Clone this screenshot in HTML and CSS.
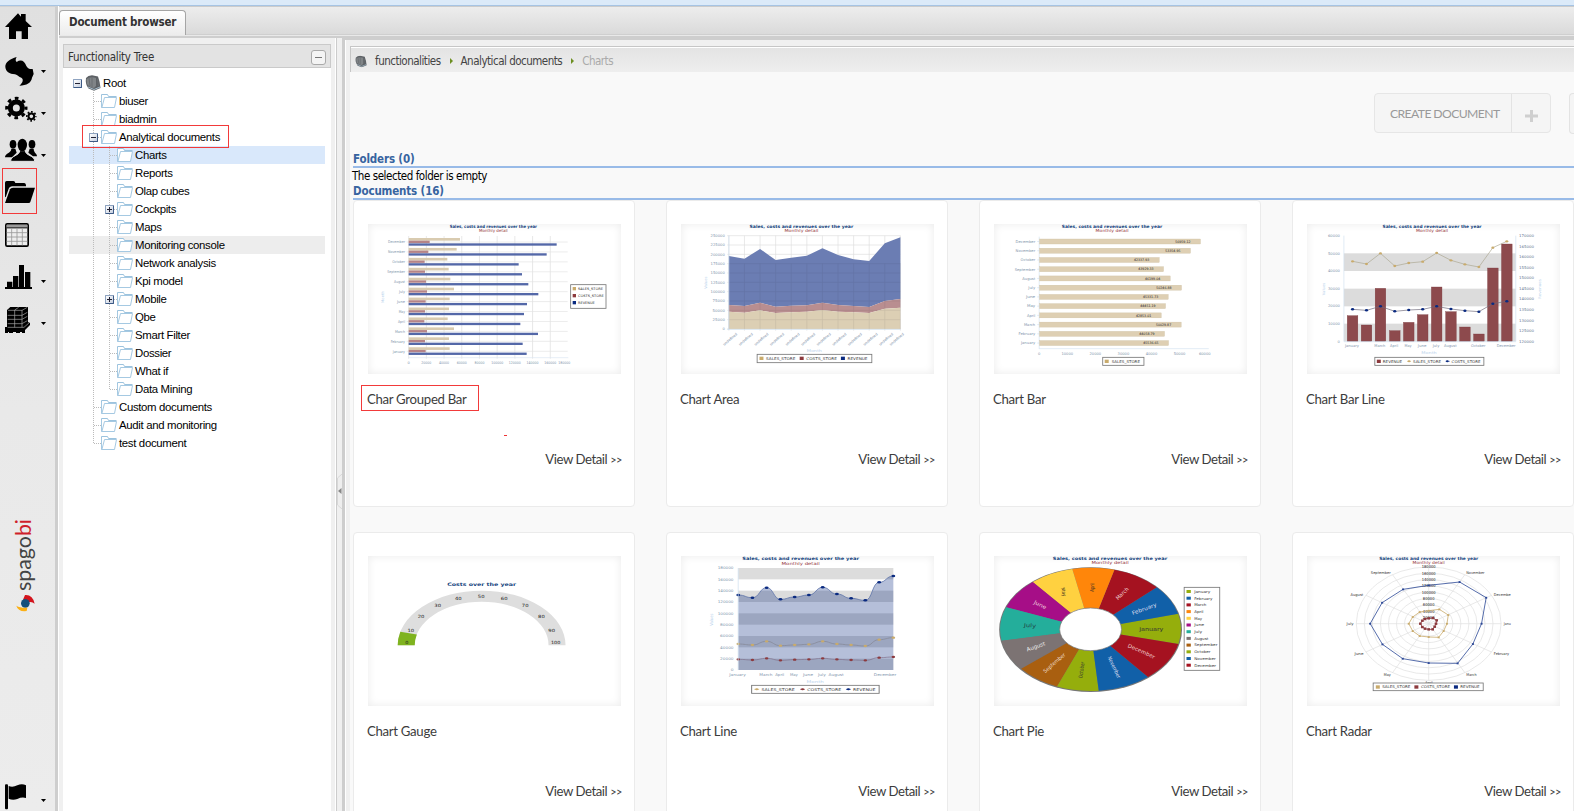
FILE: index.html
```html
<!DOCTYPE html>
<html lang="en">
<head>
<meta charset="utf-8">
<title>Document browser</title>
<link rel="stylesheet" href="styles.css">
</head>
<body>
<div class="topstrip"></div>
<div class="app">
  <nav class="sidebar">
    <svg class="item" viewBox="0 18 165 126"><path d="M15 81L54 40 63 50V42H77V63L96 81H84V117H65V94H48V117H27V81Z"/></svg>
    <svg class="item" viewBox="0 144 165 126"><path d="M50 171C30 176 15 188 16 201C17 214 28 222 45 223C54 225 56 231 64 233C72 238 68 249 58 257C80 256 94 248 96 233L101 222 98 207C90 208 84 206 79 198C74 182 62 177 50 186C46 183 46 177 50 171Z"/><path d="M123 210H138L130.500 219Z"/></svg>
    <svg class="item" viewBox="0 270 165 126"><g fill="none" stroke="#000"><circle cx="49" cy="324" r="18" stroke-width="15"/><circle cx="49" cy="324" r="29" stroke-width="9" stroke-dasharray="11 11.780" stroke-dashoffset="5.500"/><circle cx="94" cy="349" r="8.500" stroke-width="6"/><circle cx="94" cy="349" r="13.500" stroke-width="5" stroke-dasharray="5.300 5.300" stroke-dashoffset="2.600"/></g><path d="M123 336H138L130.500 345Z"/></svg>
    <svg class="item" viewBox="0 396 165 126"><ellipse cx="39" cy="433" rx="10" ry="13"/><path d="M15 472C15 459 33 461 34 446H46L50 458 36 472Z"/><ellipse cx="96" cy="433" rx="10" ry="13"/><path d="M111 469C111 459 102 461 101 446H89L85 458 99 469Z"/><path d="M32 484C32 465 59 468 59 452H76C76 468 104 465 104 484Z" stroke="#e4e4e4" stroke-width="3"/><ellipse cx="67" cy="435" rx="14" ry="19"/><path d="M123 462H138L130.500 471Z"/></svg>
    <svg class="item" viewBox="0 522 165 126"><path d="M15 590V548Q15 543 20 543H40Q45 543 46 549H73Q78 550 78 556V559H36Q28 560 26 566L17 592Z"/><path d="M39 563H105L91 606Q90 609 86 609H15L30 568Q32 563 39 563Z"/></svg>
    <svg class="item" viewBox="0 648 165 126"><rect x="17.500" y="671.500" width="67" height="67" rx="4" fill="#eee" stroke="#000" stroke-width="5"/><path fill="#999" d="M20 674H82V682H20Z"/><path d="M20 682H82V685H20Z"/><path d="M20 698H82M20 711H82M20 724H82M35 686V736M51 686V736M67 686V736" stroke="#999" stroke-width="2.500"/></svg>
    <svg class="item" viewBox="0 774 165 126"><path d="M21 845H37V863H21ZM39 828H55V863H39ZM57 795H72V863H57ZM75 816H91V863H75ZM15 861H96V867H15Z"/><path d="M123 840H138L130.500 849Z"/></svg>
    <svg class="item" viewBox="0 900 165 126"><path d="M21 930L31 921H84V966L90 969V975L75 990H21V987H15V981H21Z"/><path d="M15 984H75V999H66V996H60V999H48V996H39V999H27V996H24V999H15Z"/><path d="M23 946H66L82 937M23 958H66L82 949M23 971H66L82 962M44 930V982M66 930V982M24 931H66L82 922M44 930L56 922M23 982H72L88 968" stroke="#aaa" stroke-width="2" fill="none"/><path d="M123 966H138L130.500 975Z"/></svg>
    <svg class="brand" viewBox="0 1530 165 330"><text class="brandname" transform="translate(93 1773) rotate(-90)" textLength="216" lengthAdjust="spacingAndGlyphs">spago<tspan class="bi">bi</tspan></text><path fill="#d3141c" d="M75 1785Q98 1783 104 1811Q94 1803 84 1808Q80 1800 69 1799Z"/><circle cx="76" cy="1810" r="13" fill="#14507c"/><path fill="#fbb016" d="M49 1817Q60 1824 82 1823L80 1833Q54 1836 49 1817Z"/></svg>
    <svg class="flag" viewBox="0 2310 165 123"><rect x="15" y="2353" width="9" height="75" rx="3"/><path d="M26 2358Q38 2363 52 2356 66 2350 78 2356V2394Q66 2390 52 2397 38 2402 26 2396Z"/><path d="M123 2397H138L130.500 2406Z"/></svg>
    <div class="mark mark-nav"></div>
  </nav>
  <div class="main">
    <div class="tabbar"><div class="tab"><span>Document browser</span></div></div>
    <div class="panes">
      <section class="treepane">
        <header class="treehead"><span>Functionality Tree</span><i class="collapse"></i></header>
        <div class="tree">
          <div class="row"><i class="c box root"></i><svg class="ico cube" viewBox="0 0 16 16"><use href="#cube"/></svg><span>Root</span></div>
          <div class="row"><i class="c"></i><i class="c tee"></i><svg class="ico"><use href="#dir"/></svg><span>biuser</span></div>
          <div class="row"><i class="c"></i><i class="c tee"></i><svg class="ico"><use href="#dir"/></svg><span>biadmin</span></div>
          <div class="row"><i class="c"></i><i class="c tee box"></i><svg class="ico"><use href="#dir"/></svg><span>Analytical documents</span></div>
          <div class="row selected"><i class="c"></i><i class="c line"></i><i class="c tee"></i><svg class="ico"><use href="#dir"/></svg><span>Charts</span></div>
          <div class="row"><i class="c"></i><i class="c line"></i><i class="c tee"></i><svg class="ico"><use href="#dir"/></svg><span>Reports</span></div>
          <div class="row"><i class="c"></i><i class="c line"></i><i class="c tee"></i><svg class="ico"><use href="#dir"/></svg><span>Olap cubes</span></div>
          <div class="row"><i class="c"></i><i class="c line"></i><i class="c tee box plus"></i><svg class="ico"><use href="#dir"/></svg><span>Cockpits</span></div>
          <div class="row"><i class="c"></i><i class="c line"></i><i class="c tee"></i><svg class="ico"><use href="#dir"/></svg><span>Maps</span></div>
          <div class="row hover"><i class="c"></i><i class="c line"></i><i class="c tee"></i><svg class="ico"><use href="#dir"/></svg><span>Monitoring console</span></div>
          <div class="row"><i class="c"></i><i class="c line"></i><i class="c tee"></i><svg class="ico"><use href="#dir"/></svg><span>Network analysis</span></div>
          <div class="row"><i class="c"></i><i class="c line"></i><i class="c tee"></i><svg class="ico"><use href="#dir"/></svg><span>Kpi model</span></div>
          <div class="row"><i class="c"></i><i class="c line"></i><i class="c tee box plus"></i><svg class="ico"><use href="#dir"/></svg><span>Mobile</span></div>
          <div class="row"><i class="c"></i><i class="c line"></i><i class="c tee"></i><svg class="ico"><use href="#dir"/></svg><span>Qbe</span></div>
          <div class="row"><i class="c"></i><i class="c line"></i><i class="c tee"></i><svg class="ico"><use href="#dir"/></svg><span>Smart Filter</span></div>
          <div class="row"><i class="c"></i><i class="c line"></i><i class="c tee"></i><svg class="ico"><use href="#dir"/></svg><span>Dossier</span></div>
          <div class="row"><i class="c"></i><i class="c line"></i><i class="c tee"></i><svg class="ico"><use href="#dir"/></svg><span>What if</span></div>
          <div class="row"><i class="c"></i><i class="c line"></i><i class="c tee last"></i><svg class="ico"><use href="#dir"/></svg><span>Data Mining</span></div>
          <div class="row"><i class="c"></i><i class="c tee"></i><svg class="ico"><use href="#dir"/></svg><span>Custom documents</span></div>
          <div class="row"><i class="c"></i><i class="c tee"></i><svg class="ico"><use href="#dir"/></svg><span>Audit and monitoring</span></div>
          <div class="row"><i class="c"></i><i class="c tee last"></i><svg class="ico"><use href="#dir"/></svg><span>test document</span></div>
          <div class="mark mark-tree"></div>
        </div>
      </section>
      <div class="splitter"><svg class="handle" viewBox="0 0 5 35"><path d="M5 0L.5 4V31L5 35" fill="#eee" stroke="#d8d8d8"/><path d="M4.500 14V20L1 17Z" fill="#888"/></svg></div>
      <section class="browser">
        <div class="crumbs">
          <svg class="crumbico" viewBox="0 0 16 16"><use href="#cube"/></svg>
          <span>functionalities</span><i class="arrow"></i><span>Analytical documents</span><i class="arrow"></i><span class="current">Charts</span>
        </div>
        <div class="actions">
          <div class="create"><span class="label">CREATE DOCUMENT</span><span class="plusbtn"><svg viewBox="0 0 13 12"><path d="M5 0H8V4.500H13V7.500H8V12H5V7.500H0V4.500H5Z" fill="#cfcfcf"/></svg></span></div>
          <div class="nextbtn"></div>
        </div>
        <h2>Folders (0)</h2>
        <p class="empty">The selected folder is empty</p>
        <h2>Documents (16)</h2>
        <div class="cards">
          <article class="card"><svg class="thumb" id="grouped" viewBox="54 72 759 450"></svg><h3>Char Grouped Bar</h3><a>View Detail <small>&gt;&gt;</small></a><div class="mark mark-card"></div><div class="dash"></div></article>
          <article class="card"><svg class="thumb" id="area" viewBox="61 72 761 450"></svg><h3>Chart Area</h3><a>View Detail <small>&gt;&gt;</small></a></article>
          <article class="card"><svg class="thumb" id="bar" viewBox="54 72 761 450"></svg><h3>Chart Bar</h3><a>View Detail <small>&gt;&gt;</small></a></article>
          <article class="card"><svg class="thumb" id="barline" viewBox="63 72 761 450"></svg><h3>Chart Bar Line</h3><a>View Detail <small>&gt;&gt;</small></a></article>
          <article class="card"><svg class="thumb" id="gauge" viewBox="46 78 639 450"></svg><h3>Chart Gauge</h3><a>View Detail <small>&gt;&gt;</small></a></article>
          <article class="card"><svg class="thumb" id="line" viewBox="836 78 641 450"></svg><h3>Chart Line</h3><a>View Detail <small>&gt;&gt;</small></a></article>
          <article class="card"><svg class="thumb" id="pie" viewBox="54 78 761 450"></svg><h3>Chart Pie</h3><a>View Detail <small>&gt;&gt;</small></a></article>
          <article class="card"><svg class="thumb" id="radar" viewBox="63 78 761 450"></svg><h3>Chart Radar</h3><a>View Detail <small>&gt;&gt;</small></a></article>
        </div>
      </section>
    </div>
  </div>
</div>
<svg class="defs">
  <symbol id="dir" viewBox="0 0 16 18"><path d="M.5 15.500V2.500H6.500L7.500 4.500H15.500" fill="#fff" stroke="#9cc3de"/><path d="M.5 4V15.500H13.500L15.500 5.500H3.500L1 15" fill="#fff" stroke="#a5c9e2"/></symbol>
  <symbol id="cube" viewBox="0 0 16 16"><path d="M1 3Q3 .5 7 .3L13 1.500Q15 7 15.500 13L9 15.800 3.500 13.500Q0 9 1 3Z" fill="#5d6165"/><path d="M1.500 4Q6 1 11 3V11L9 13Q4 12 2 9Z" fill="#808487"/><path d="M4 3L5 11M7 2V12M12.500 4L13.500 11" stroke="#686c70"/><path d="M3 12L9 14.500 15 12" stroke="#a6bccb" fill="none"/></symbol>
</svg>
<script src="charts.js"></script>
</body>
</html>
```
FILE: styles.css
```css
* { box-sizing: border-box; }
body { margin: 0; width: 1574px; height: 811px; overflow: hidden; background: #e9e9e9; font-family: "DejaVu Sans Condensed", "DejaVu Sans", sans-serif; font-size: 11.5px; color: #000; }
.defs { position: absolute; width: 0; height: 0; }
.topstrip { height: 6px; background: #dbeaf9; border-bottom: 1px solid #a6c4e4; }
.app { display: flex; height: 805px; }
.sidebar { position: relative; width: 58px; display: flex; flex-direction: column; background: linear-gradient(#e0e0e0, #e9e9e9 50%, #ececec); border-top: 1px solid #d2d2d2; border-right: 3px solid #cecece; }
.sidebar svg { width: 55px; display: block; flex: none; }
.item { height: 42px; }
.item:first-child { margin-top: -1px; }
.brand { height: 110px; margin-top: 168px; }
.brandname { font: 66px Lato, sans-serif; fill: #444; }
.bi { fill: #cf1f2b; }
.flag { height: 41px; margin-top: 150px; }
.mark { position: absolute; border: 1px solid #f23a3a; }
.mark-nav { left: 2px; top: 161px; width: 35px; height: 46px; }
.main { flex: 1; display: flex; flex-direction: column; border-left: 1px solid #fff; min-width: 0; }
.tabbar { height: 29px; padding: 3px 0 0; background: linear-gradient(#ededed, #dadada); border-top: 1px solid #ccc; border-bottom: 1px solid #cfcfcf; flex: none; }
.tab { width: 127px; height: 25px; border: 1px solid #a5a5a5; border-bottom: 0; border-radius: 4px 4px 0 0; background: linear-gradient(#fff, #ececec); padding: 4px 0 0 9px; font-weight: bold; letter-spacing: -0.2px; color: #333; line-height: 15px; white-space: nowrap; }
.panes { flex: 1; display: flex; margin-top: 1px; border-top: 2px solid #cecece; background: #f0f0f0; min-height: 0; }
.treepane { width: 277px; padding: 6px 4px 0; border-right: 1px solid #fff; display: flex; flex-direction: column; }
.treehead { height: 24px; border: 1px solid #cacaca; background: #e3e3e3; display: flex; justify-content: space-between; align-items: center; padding: 2px 4px 0 4px; letter-spacing: -0.27px; color: #333; flex: none; }
.collapse { width: 15px; height: 15px; border: 1px solid #aaa; border-radius: 3px; background: linear-gradient(#777, #777) center / 7px 1px no-repeat #f4f4f4; }
.tree { position: relative; flex: 1; background: #fff; padding: 6px 6px 0; font-family: "Liberation Sans", Arial, sans-serif; font-size: 11.4px; letter-spacing: -0.33px; }
.row { height: 18px; display: flex; align-items: center; white-space: nowrap; }
.row span { padding-left: 2px; line-height: 18px; }
.row.selected { background: #d9e8fb; }
.row.hover { background: #ededed; }
.ico { width: 16px; height: 18px; flex: none; }
.cube { height: 16px; }
.c { width: 16px; height: 18px; flex: none; background-repeat: no-repeat; position: relative; }
.line { background-image: repeating-linear-gradient(#bbb 0 1px, transparent 1px 2px); background-size: 1px 18px; background-position: 8px 0; }
.tee { background-image: repeating-linear-gradient(#bbb 0 1px, transparent 1px 2px), repeating-linear-gradient(90deg, #bbb 0 1px, transparent 1px 2px); background-size: 1px 18px, 7px 1px; background-position: 8px 0, 9px 9px; }
.tee.last { background-size: 1px 10px, 7px 1px; }
.box::after { content: ""; box-sizing: border-box; position: absolute; left: 4px; top: 5px; width: 9px; height: 9px; border: 1px solid #8ea3c0; border-right-color: #3d5a86; border-bottom-color: #3d5a86; border-radius: 1px; background: linear-gradient(#223, #223) center / 5px 1px no-repeat, linear-gradient(135deg, #fff, #c6cfdf); }
.plus::after { background: linear-gradient(#223, #223) center / 5px 1px no-repeat, linear-gradient(#223, #223) center / 1px 5px no-repeat, linear-gradient(135deg, #fff, #c6cfdf); }
.mark-tree { left: 19px; top: 57px; width: 147px; height: 23px; }
.splitter { width: 6px; border-left: 1px solid #ccc; display: flex; align-items: flex-start; padding-top: 436px; }
.handle { width: 5px; height: 35px; }
.browser { flex: 1; min-width: 0; border-left: 3px solid #cecece; border-top: 2px solid #cecece; box-shadow: inset 1px 0 #fff; padding: 6px 0 0 5px; display: flex; flex-direction: column; }
.crumbs { height: 26px; flex: none; border-top: 1px solid #c6c6c6; border-left: 1px solid #c6c6c6; box-shadow: inset 0 1px #fff; background: linear-gradient(#e3e3e3, #eee); display: flex; align-items: center; padding: 3px 0 0 4px; letter-spacing: -0.5px; color: #444; white-space: nowrap; }
.crumbico { width: 12px; height: 13px; margin-right: 8px; }
.arrow { border: 3px solid transparent; border-left-color: #6d8f22; border-right: 0; margin: 0 8px 0 9px; }
.current { color: #aaa; }
.actions { height: 80px; flex: none; background: #f9f9f9; padding: 21px 0 0; display: flex; justify-content: flex-end; }
.create { width: 177px; height: 40px; border: 1px solid #e6e6e6; border-radius: 4px; background: #f5f5f5; display: flex; margin-right: 18px; }
.label { width: 137px; border-right: 1px solid #e3e3e3; padding: 11px 0 0 15px; font: 12.2px/18px Lato, sans-serif; letter-spacing: -0.6px; color: #999; white-space: nowrap; }
.plusbtn { flex: 1; display: flex; align-items: center; justify-content: center; padding-top: 5px; }
.plusbtn svg { width: 13px; height: 12px; }
.nextbtn { width: 5px; height: 41px; border: 1px solid #e3e3e3; border-right: 0; border-radius: 4px 0 0 4px; background: #f5f5f5; }
.browser h2 { margin: 0; height: 16px; flex: none; background: #f9f9f9; border-bottom: 2px solid #99bbe8; margin-left: 3px; box-shadow: -3px 0 #f9f9f9; font-size: 11.5px; letter-spacing: -0.15px; line-height: 14px; color: #3764a0; white-space: nowrap; }
.empty { margin: 0; height: 16px; flex: none; background: #f9f9f9; padding-left: 2px; line-height: 16px; letter-spacing: -0.45px; }
.cards { flex: 1; background: #f9f9f9; padding-left: 3px; display: grid; grid-template-columns: repeat(4, 282px); grid-auto-rows: 307px; column-gap: 31px; row-gap: 25px; overflow: hidden; }
.card { position: relative; background: #fff; border: 1px solid #ebebeb; border-radius: 4px; padding: 23px 14px 0; display: flex; flex-direction: column; font-family: Lato, sans-serif; color: #3c3c3c; }
.thumb { width: 253px; height: 150px; flex: none; display: block; background: #fff; box-shadow: inset 0 0 8px #eaeaea; font-family: "DejaVu Sans", sans-serif; }
.card h3 { margin: 15px 0 0 -1px; font-size: 13.2px; font-weight: normal; letter-spacing: -0.3px; line-height: 20px; white-space: nowrap; }
.card a { margin: 40px -2px 0 0; font-size: 13.2px; letter-spacing: -0.45px; line-height: 20px; align-self: flex-end; white-space: nowrap; }
.card small { font-size: 11px; }
.mark-card { left: 7px; top: 184px; width: 118px; height: 26px; }
.dash { position: absolute; left: 150px; top: 234px; width: 3px; height: 1px; background: #e33; }
```
FILE: charts.js
```js
const MONTHS = ['January', 'February', 'March', 'April', 'May', 'June', 'July', 'August', 'September', 'October', 'November', 'December'];
const TAN = '#c9ab6c', RED = '#8c3a3e', NAVY = '#0a2a80', AXIS = '#8195ac';
const f = n => n.toFixed(1);
const rect = (x, y, w, h, fill, extra = '') => `<rect x="${f(x)}" y="${f(y)}" width="${f(w)}" height="${f(h)}" fill="${fill}" ${extra}/>`;
const line = (x1, y1, x2, y2, c = '#ddd', w = 2) => `<path d="M${x1} ${y1}L${x2} ${y2}" stroke="${c}" stroke-width="${w}"/>`;

// y is the vertical middle of the text
function text(s, x, y, w, o = {}) {
  const { size = 11, fill = AXIS, a = 'middle', rot = 0, bold = false } = o;
  return `<text transform="translate(${x} ${y + (rot ? 0 : size * 0.36)}) rotate(${rot})" font-size="${size}" fill="${fill}" text-anchor="${a}" ${bold ? 'font-weight="bold"' : ''} ${w ? `textLength="${w}" lengthAdjust="spacingAndGlyphs"` : ''}>${s}</text>`;
}
const titles = (x, y, w, y2, w2) =>
  text('Sales, costs and revenues over the year', x, y, w, { size: 13, fill: '#123f7c', bold: true }) +
  text('Monthly detail', x, y2, w2, { size: 12, fill: '#93343a' });
const frame = (x, y, w, h) => rect(x, y, w, h, '#fff', 'stroke="#777" stroke-width="2.500"');
const put = (id, s) => {
  const el = document.getElementById(id);
  el.setAttribute('preserveAspectRatio', 'none');
  el.innerHTML = s;
};
const poly = (pts, c, w = 2) => `<polyline points="${pts.map(p => p.join()).join(' ')}" fill="none" stroke="${c}" stroke-width="${w}"/>`;
const dots = (pts, c, r = 4) => pts.map(p => `<ellipse cx="${p[0]}" cy="${p[1]}" rx="${r + 1}" ry="${r}" fill="${c}"/>`).join('');
function smooth(pts) {
  let d = `M${pts[0]}`;
  for (let i = 1; i < pts.length; i++) {
    const m = (pts[i - 1][0] + pts[i][0]) / 2;
    d += `C${m} ${pts[i - 1][1]} ${m} ${pts[i][1]} ${pts[i]}`;
  }
  return d;
}

function grouped() {
  let s = titles(430, 78, 262, 93, 86);
  for (let i = 0; i < 10; i++) {
    const x = 176 + 53.1 * i;
    if (i < 9) s += line(x, 108, x, 476, '#dcdcdc');
    s += text(i * 20000, i === 9 ? 643 : x, 487, i ? (i < 5 ? 30 : 36) : 7);
  }
  const sales = [330, 320, 292, 296, 301, 312, 299, 297, 293, 312, 297, 299];
  const costs = [239, 235, 224, 225, 228, 231, 227, 225, 223, 231, 225, 227];
  const rev = [620, 590, 506, 516, 535, 565, 531, 522, 511, 564, 518, 530];
  const lw = [51, 51, 38, 53, 33, 18, 24, 19, 21, 30, 43, 37];
  for (let i = 0; i < 12; i++) {
    const y = 126 + 29.8 * i;
    s += line(170, y, 653, y, '#e2e2e2') + text(MONTHS[11 - i], 165, y, lw[i], { a: 'end' });
    s += rect(176, y - 12, sales[i] - 176, 8, '#d9cbb0') + rect(176, y - 4, costs[i] - 176, 7, '#b58488') + rect(176, y + 4, rev[i] - 176, 7, '#5468a8');
  }
  s += line(176, 473, 655, 473, '#dbe6f2') + text('Month', 102, 291, 36, { rot: -90, fill: '#b9d2ec' });
  s += frame(662, 254, 106, 71);
  [['SALES_STORE', TAN, 75], ['COSTS_STORE', RED, 77], ['REVENUE', NAVY, 50]].forEach((l, i) => {
    s += rect(668, 261 + 21 * i, 10, 10, l[1]) + text(l[0], 684, 266 + 21 * i, l[2], { a: 'start', fill: '#333', size: 10 });
  });
  put('grouped', s);
}

function area() {
  let s = titles(423, 78, 312, 93, 102);
  const xs = MONTHS.map((m, i) => f(205 + 46.9 * i));
  for (let i = 0; i < 11; i++) s += line(200, 107 + 28 * i, 721, 107 + 28 * i, '#dedede') + text(250000 - 25000 * i, 193, 107 + 28 * i, i === 10 ? 7 : i > 6 ? 37 : 43, { a: 'end' });
  xs.forEach(x => s += line(x, 107, x, 392, '#dedede'));
  const top = [168, 176, 147, 180, 173, 167, 145, 165, 178, 183, 130, 112];
  const mid = [315, 318, 308, 320, 317, 316, 308, 315, 318, 321, 303, 297];
  const low = [335, 338, 331, 339, 337, 335, 330, 335, 337, 339, 326, 323];
  const base = xs.map(() => 387);
  const band = (a, b, c) => `<polygon points="${xs.map((x, i) => x + ',' + a[i]).join(' ')} ${xs.map((x, i) => x + ',' + b[i]).reverse().join(' ')}" fill="${c}"/>`;
  s += band(top, mid, '#6b7db3') + band(mid, low, '#b98e90') + band(low, base, '#dccfb4');
  s += '<g opacity=".1">';
  for (let i = 3; i < 10; i++) s += line(205, 107 + 28 * i, 721, 107 + 28 * i, '#223');
  xs.forEach(x => s += line(x, 190, x, 387, '#223'));
  s += '</g>' + line(205, 107, 205, 390, '#cfe0f0') + line(200, 388, 721, 388, '#cfe0f0');
  xs.forEach((x, i) => s += text('undefined', i === 11 ? 732 : +x + 26, 404, 52, { rot: -40, a: 'end', fill: '#7288a0' }));
  s += text('Values', 139, 248, 36, { rot: -90, fill: '#b9d2ec' }) + text('Month', 462, 451, 46, { fill: '#b9d2ec' });
  s += frame(290, 463, 345, 25);
  [['SALES_STORE', TAN, 297, 317, 88], ['COSTS_STORE', RED, 418, 438, 92], ['REVENUE', NAVY, 542, 562, 60]].forEach(l => {
    s += rect(l[2], 470, 12, 10, l[1]) + text(l[0], l[3], 475, l[4], { a: 'start', fill: '#333' });
  });
  put('area', s);
}

function bar() {
  let s = titles(409, 78, 302, 93, 99);
  const ends = [675, 645, 551, 564, 584, 618, 578, 570, 557, 617, 567, 579];
  const vals = ['56959.12', '53354.95', '42337.93', '43929.33', '46199.04', '50246.88', '45331.73', '44451.19', '42853.01', '50029.87', '44058.79', '45536.65'];
  const lw = [59, 59, 44, 62, 39, 21, 28, 25, 25, 34, 50, 43];
  s += line(190, 110, 190, 447, '#d3e2f0') + line(190, 446, 700, 446, '#d3e2f0');
  for (let i = 0; i < 12; i++) {
    const y = 124.5 + 27.7 * i;
    s += text(MONTHS[11 - i], 178, y, lw[i], { a: 'end' }) + line(184, y, 190, y, '#cfe0f0');
    s += rect(191, y - 7.5, ends[i] - 191, 15, '#decfb3', 'stroke="#cdbfa2"') + text(vals[i], ends[i] - 30, y, 46, { a: 'end', fill: '#222', size: 10 });
  }
  for (let i = 0; i < 7; i++) s += text(i * 10000, i === 6 ? 688 : 190 + 84.4 * i, 460, i ? 35 : 7);
  s += frame(381, 472, 124, 24) + rect(387, 479, 12, 10, TAN) + text('SALES_STORE', 408, 484, 85, { a: 'start', fill: '#333' });
  put('bar', s);
}

function barline() {
  let s = titles(439, 78, 298, 93, 97);
  [160, 266, 371].forEach(y => s += rect(174, y, 517, 53, '#dcdcdc'));
  const xs = [200, 242, 284, 327, 369, 411, 453, 496, 538, 580, 622, 664];
  [347, 375, 265, 392, 367, 344, 261, 335, 381, 402, 204, 132].forEach((y, i) => s += rect(xs[i] - 16, y, 32, 424 - y, '#8d4a4d', 'stroke="#7a3a3e"'));
  const a = [184, 192, 160, 198, 189, 185, 159, 181, 193, 201, 143, 124].map((y, i) => [xs[i], y]);
  const b = [328, 331, 319, 334, 330, 328, 319, 327, 332, 335, 311, 304].map((y, i) => [xs[i], y]);
  s += poly(a, '#aaa68f') + dots(a, TAN, 3.5) + poly(b, '#6d6878') + dots(b, NAVY, 3.8);
  s += line(174, 107, 174, 424, '#cfe0f0') + line(691, 107, 691, 424, '#cfe0f0') + line(174, 425, 691, 425, '#cfe0f0');
  for (let i = 0; i < 7; i++) s += text(60000 - i * 10000, 162, 107 + 52.8 * i, i === 6 ? 7 : 36, { a: 'end' });
  for (let i = 0; i < 11; i++) s += text(170000 - i * 5000, 701, 107 + 31.7 * i, 45, { a: 'start', fill: '#5f7590' });
  [[0, 42], [2, 33], [3, 24], [4, 21], [5, 26], [6, 20], [7, 38], [9, 43], [11, 57]].forEach(m => s += text(MONTHS[m[0]], xs[m[0]] - 2, 438, m[1]));
  s += text('Values', 116, 267, 38, { rot: -90, fill: '#b9d2ec' }) + text('Revenues', 767, 267, 60, { rot: -90, fill: '#b9d2ec' }) + text('Month', 430, 459, 46, { fill: '#b9d2ec' });
  s += frame(267, 472, 328, 24) + rect(273, 479, 12, 10, RED) + text('REVENUE', 291, 484, 58, { a: 'start', fill: '#333' });
  s += line(364, 484, 376, 484, TAN) + dots([[370, 484]], TAN, 3) + text('SALES_STORE', 382, 484, 84, { a: 'start', fill: '#333' });
  s += line(480, 484, 492, 484, NAVY) + dots([[485, 484]], NAVY, 3) + text('COSTS_STORE', 498, 484, 87, { a: 'start', fill: '#333' });
  put('barline', s);
}

function gauge() {
  const ring = (t0, t1, c) => {
    const p = (rx, ry, t) => f(333 + rx * Math.cos(t)) + ' ' + f(346 - ry * Math.sin(t));
    return `<path fill="${c}" d="M${p(212, 164, t0)}A212 164 0 0 1 ${p(212, 164, t1)}L${p(169, 131, t1)}A169 131 0 0 0 ${p(169, 131, t0)}Z"/>`;
  };
  let s = text('Costs over the year', 333, 163, 174, { size: 14, fill: '#123f7c', bold: true });
  s += ring(Math.PI, 0, '#dedede') + ring(Math.PI, Math.PI - 0.252, '#7fb31f');
  [[144, 338], [154, 300], [180, 259], [222, 227], [274, 205], [332, 198], [390, 205], [443, 227], [484, 259], [510, 300], [520, 338]].forEach((p, i) => s += text(i * 10, p[0], p[1], i === 0 ? 8 : i === 10 ? 24 : 17, { fill: '#222', size: 13 }));
  put('gauge', s);
}

function lines() {
  let s = titles(1139, 86, 296, 100, 97);
  for (let i = 0; i < 5; i++) s += rect(981, 114 + 68 * i, 393, 34, '#dcdcdc');
  const xs = [981, 1017, 1053, 1088, 1124, 1160, 1195, 1231, 1267, 1303, 1338, 1374];
  const r = [195, 203, 173, 208, 201, 195, 172, 192, 205, 211, 157, 138].map((y, i) => [xs[i], y]);
  const a = [342, 345, 334, 347, 345, 343, 334, 342, 345, 348, 329, 323].map((y, i) => [xs[i], y]);
  const c = [388, 390, 385, 391, 389, 388, 385, 388, 390, 391, 383, 381].map((y, i) => [xs[i], y]);
  s += `<path d="${smooth(r)}V420H981Z" fill="#0a2a80" opacity=".3"/>`;
  [[r, '#566da5'], [a, '#858795'], [c, '#80718b']].forEach(p => s += `<path d="${smooth(p[0])}" fill="none" stroke="${p[1]}" stroke-width="2"/>`);
  s += dots(r, NAVY, 3.8) + dots(a, TAN, 3.5) + dots(c, RED, 3.5);
  s += line(981, 114, 981, 420, '#cfe0f0');
  for (let i = 0; i < 10; i++) s += text(180000 - i * 20000, 969, 114 + 34 * i, i === 9 ? 7 : i > 4 ? 34 : 40, { a: 'end' });
  [[0, 42], [2, 33], [3, 23], [4, 20], [5, 26], [6, 20], [7, 38]].forEach(m => s += text(MONTHS[m[0]], xs[m[0]] - 2, 434, m[1]));
  s += text('December', 1353, 434, 57) + text('Values', 917, 269, 36, { rot: -90, fill: '#b9d2ec' }) + text('Month', 1176, 454, 44, { fill: '#b9d2ec' });
  s += frame(1015, 466, 323, 24);
  [['SALES_STORE', TAN, 1028, 1040, 84], ['COSTS_STORE', RED, 1144, 1156, 86], ['REVENUE', NAVY, 1260, 1272, 57]].forEach(l => {
    s += line(l[2] - 6, 478, l[2] + 6, 478, l[1]) + dots([[l[2], 478]], l[1], 3) + text(l[0], l[3], 478, l[4], { a: 'start', fill: '#333' });
  });
  put('line', s);
}

function pie() {
  let s = titles(403, 84, 344, 98, 112);
  const cx = 344.5, cy = 298;
  const cuts = [[607, 342], [605, 252], [543, 172], [416, 120], [290, 118], [171, 156], [92, 232], [78, 332], [137, 416], [245, 468], [369, 482], [516, 440], [607, 342]];
  const col = ['#95ae0c', '#1160a8', '#a51220', '#ff860a', '#ffd140', '#a60e87', '#24ae9b', '#7c7373', '#a95f10', '#95ae0c', '#1160a8', '#a51220'];
  const t = cuts.map(c => Math.atan2((c[1] - cy) / 186, (c[0] - cx) / 273));
  const p = (rx, ry, a) => f(cx + rx * Math.cos(a)) + ' ' + f(cy + ry * Math.sin(a));
  s += `<ellipse cx="${cx}" cy="${cy + 1}" rx="275" ry="187" fill="#777"/>`;
  col.forEach((c, i) => s += `<path fill="${c}" d="M${p(272, 185, t[i])}A272 185 0 0 0 ${p(272, 185, t[i + 1])}L${p(93, 64, t[i + 1])}A93 64 0 0 1 ${p(93, 64, t[i])}Z"/>`);
  s += `<ellipse cx="${cx}" cy="${cy}" rx="93" ry="64" fill="#fff" stroke="#777" stroke-width="2"/>`;
  const lab = [[527, 297, 0, 73, '#333'], [506, 237, -20, 78, '#dde'], [440, 191, -44, 46, '#ecc'], [350, 172, -86, 28, '#432'], [263, 186, 76, 28, '#542'], [193, 225, 26, 40, '#ecd'], [162, 287, 4, 37, '#244'], [180, 350, -19, 58, '#eee'], [236, 399, -41, 82, '#edc'], [318, 420, -82, 50, '#333'], [415, 412, 64, 70, '#dde'], [497, 364, 24, 88, '#ecc']];
  lab.forEach((l, i) => s += `<text font-size="16" fill="${l[4]}" text-anchor="middle" dy="5" transform="translate(${l[0]} ${l[1]}) rotate(${l[2]})" textLength="${l[3]}" lengthAdjust="spacingAndGlyphs">${MONTHS[i]}</text>`);
  s += frame(626, 172, 107, 249);
  const lw = [49, 55, 37, 28, 24, 30, 24, 43, 70, 49, 65, 66];
  col.forEach((c, i) => s += rect(633, 180 + 20.1 * i, 13, 9, c) + text(MONTHS[i], 656, 184.5 + 20.1 * i, lw[i], { a: 'start', fill: '#333' }));
  put('pie', s);
}

function radar() {
  let s = '';
  const cx = 429, cy = 281;
  for (let i = 1; i < 10; i++) s += `<ellipse cx="${cx}" cy="${cy}" rx="${24.2 * i}" ry="${18.9 * i}" fill="none" stroke="#dedede" stroke-width="2"/>`;
  for (let i = 0; i < 12; i++) s += line(cx, cy, f(cx + 218 * Math.cos(i * Math.PI / 6)), f(cy + 170 * Math.sin(i * Math.PI / 6)), '#dedede');
  s += titles(429, 84, 298, 98, 97);
  for (let i = 1; i < 10; i++) s += text(i * 20000, cx, 281 - 18.9 * i, i > 4 ? 42 : 35, { fill: '#222', size: 12 });
  const sets = [
    [[[429, 242], [461, 238], [488, 255], [484, 281], [474, 303], [459, 322], [429, 321], [402, 318], [381, 303], [369, 281], [381, 261], [402, 246]], TAN, 3],
    [[[429, 265], [442, 264], [453, 271], [451, 281], [447, 290], [441, 298], [429, 298], [418, 296], [410, 291], [404, 281], [410, 272], [418, 267]], RED, 4],
    [[[429, 166], [522, 156], [602, 203], [588, 281], [562, 342], [516, 400], [429, 399], [351, 386], [290, 343], [253, 281], [289, 218], [352, 178]], '#2b4796', 3]
  ];
  sets.forEach(q => s += poly([...q[0], q[0][0]], q[1], 2.4) + q[0].map(p => rect(p[0] - q[2], p[1] - q[2] + 0.5, q[2] * 2, q[2] * 1.8, q[1])).join(''));
  [['Janu', 655, 281, 21, 'start'], ['February', 625, 370, 46, 'start'], ['March', 542, 435, 31, 'start'], ['April', 419, 458, 22, 'start'], ['May', 315, 435, 21, 'end'], ['June', 233, 370, 27, 'end'], ['July', 203, 281, 21, 'end'], ['August', 232, 193, 38, 'end'], ['September', 315, 128, 60, 'end'], ['November', 542, 128, 55, 'start'], ['Decembe', 625, 193, 51, 'start']].forEach(l => s += text(l[0], l[1], l[2], l[3], { a: l[4], fill: '#333' }));
  s += frame(262, 459, 331, 23);
  [['SALES_STORE', TAN, 270, 289, 85], ['COSTS_STORE', RED, 386, 406, 87], ['REVENUE', NAVY, 505, 524, 58]].forEach(l => {
    s += rect(l[2], 466, 12, 10, l[1]) + text(l[0], l[3], 471, l[4], { a: 'start', fill: '#333' });
  });
  put('radar', s);
}

[grouped, area, bar, barline, gauge, lines, pie, radar].forEach(draw => draw());
```
